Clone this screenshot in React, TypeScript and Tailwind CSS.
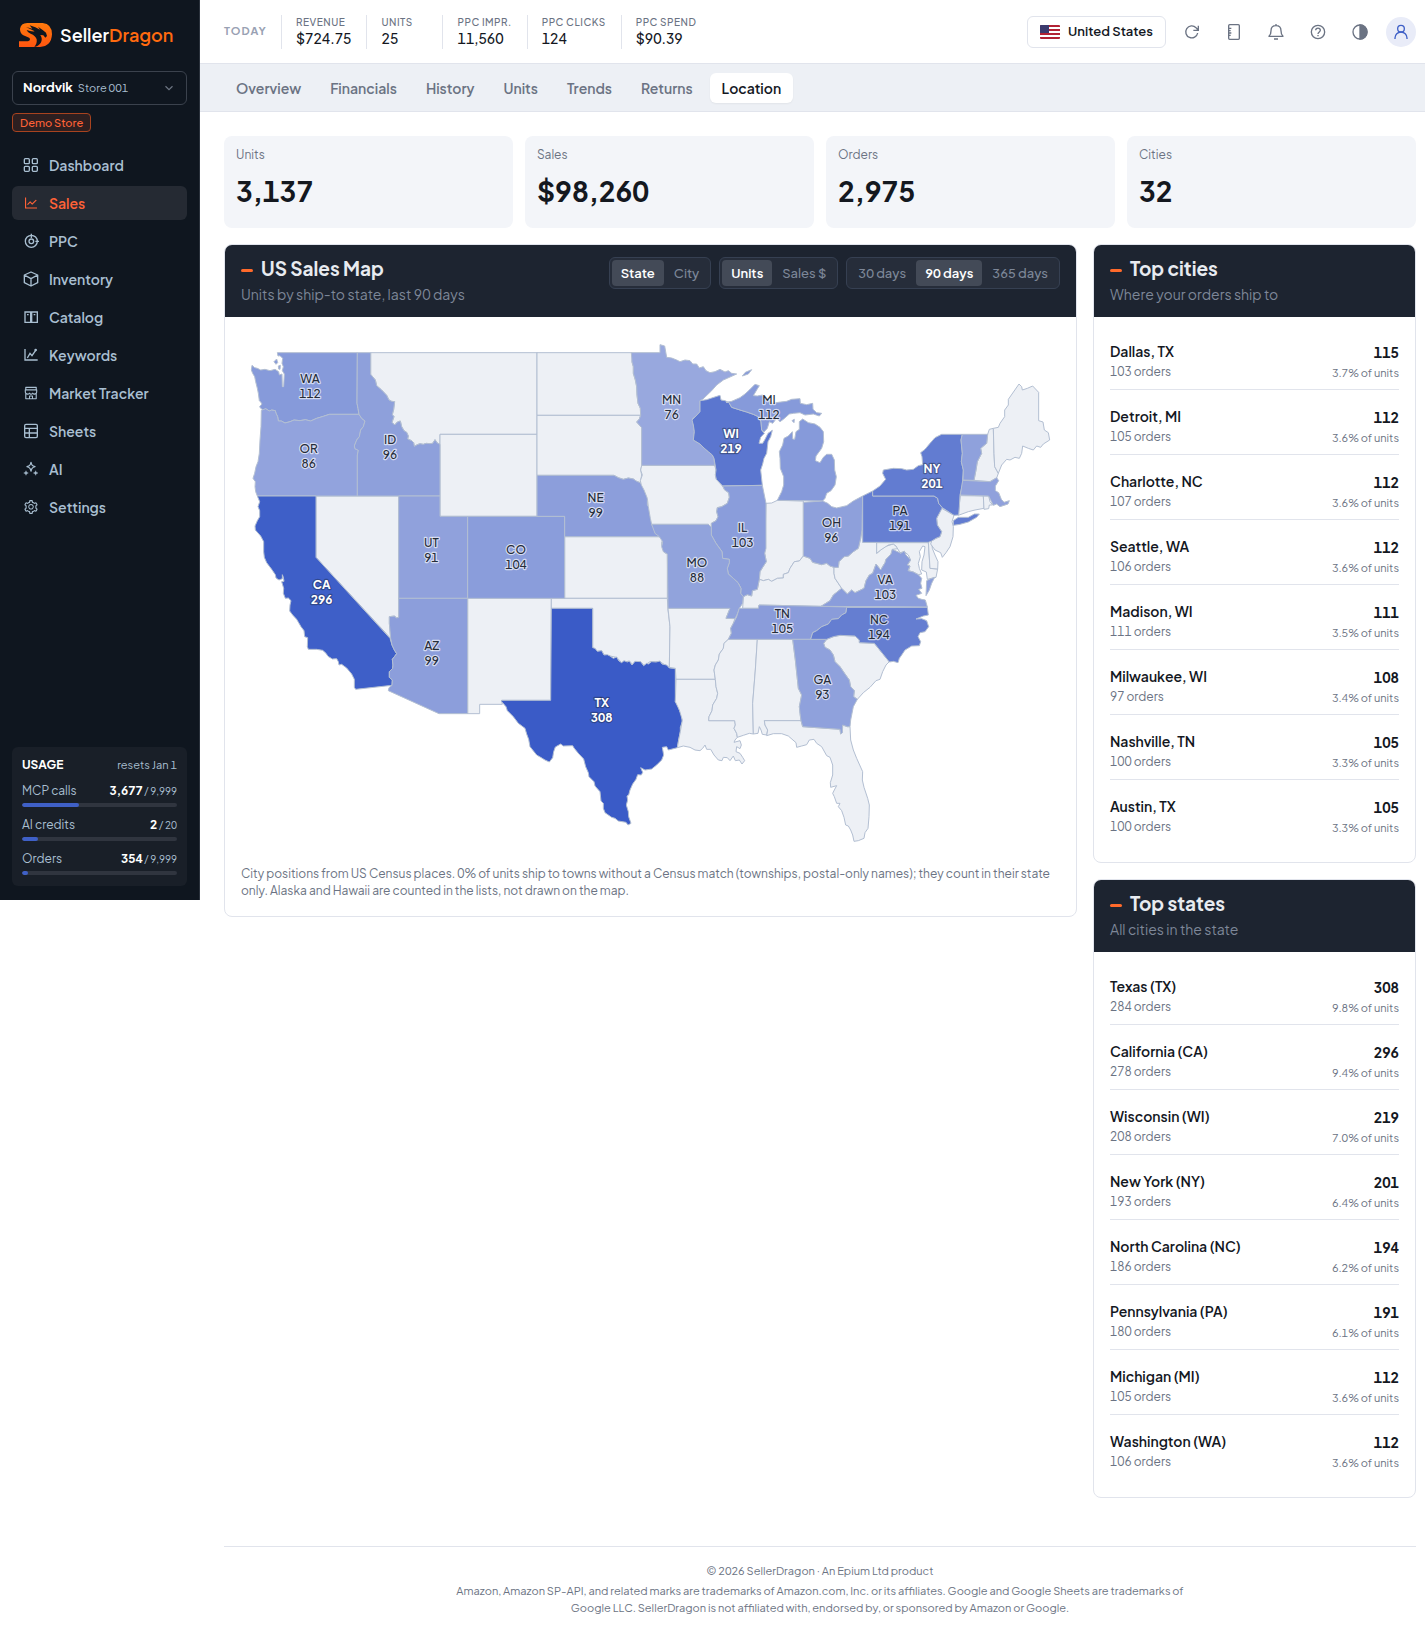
import type { ReactNode } from 'react';
import { AiOutlineLineChart, AiOutlineSetting, AiOutlineShop } from 'react-icons/ai';

type Region = { id: string; units?: number; points: string[]; label?: [number, number] };

// Western shapes, in map units (3 per pixel)
const WEST: Region[] = [
  { id: 'MT', points: ['452,338 951,338 951,583 660,583 660,613 652,609 645,599 638,610 630,611 618,610 610,613 600,611 592,614 583,619 581,608 575,602 563,597 565,588 560,577 552,572 545,560 541,543 532,546 524,555 516,547 522,530 517,524 521,508 524,485 515,484 507,480 500,466 485,450 470,437 466,420 452,403'] },
  { id: 'WY', points: ['660,583 951,583 951,829 660,829'] },
  { id: 'NV', points: ['288,768 536,768 536,1132 529,1134 524,1128 508,1130 508,1150 512,1195 288,952'] },
  { id: 'NM', points: ['743,1075 994,1075 992,1381 845,1381 847,1393 779,1393 779,1421 743,1421'] },
  { id: 'ND', points: ['951,338 1235,338 1238,352 1236,366 1240,380 1240,400 1246,420 1250,440 1251,465 1254,490 1261,505 1262,526 951,526'] },
  { id: 'SD', points: ['951,526 1262,526 1258,537 1250,546 1265,563 1265,678 1262,690 1265,705 1261,728 1250,724 1240,717 1225,714 1210,718 1195,713 1182,706 951,706'] },
  { id: 'KS', points: ['1034,890 1322,890 1330,898 1325,906 1325,916 1332,926 1334,938 1342,942 1342,1075 1034,1075'] },
  { id: 'OK', points: ['994,1075 1342,1075 1344,1110 1350,1160 1348,1282 1335,1275 1320,1265 1290,1265 1272,1277 1262,1265 1248,1265 1240,1275 1228,1263 1205,1268 1190,1252 1170,1248 1152,1245 1145,1232 1132,1234 1118,1223 1118,1105 994,1105'] },
  { id: 'WA', units: 112, label: [270, 416], points: ['172,338 412,338 411,490 414,505 417,523 328,523 310,529 290,535 272,543 256,539 240,542 222,540 210,545 195,549 184,543 175,543 173,530 168,520 166,512 155,510 148,513 137,506 130,510 122,505 119,500 126,492 122,486 118,482 115,460 112,445 107,425 104,410 98,400 94,390 96,376 104,383 112,385 122,390 135,388 150,392 165,388 176,395 178,405 186,402 187,440 191,440 193,402 187,392 190,380 186,370 188,355 180,347 174,348', '162,365 170,357 173,368 168,373', '175,378 181,376 180,388 176,387'] },
  { id: 'OR', units: 86, label: [266, 627], points: ['124,511 137,506 148,513 155,510 166,512 168,520 173,530 175,543 184,543 195,549 210,545 222,540 240,542 256,539 272,543 290,535 310,529 328,523 417,523 425,535 435,543 430,560 422,570 418,590 410,600 403,618 405,626 415,631 412,645 412,768 112,768 107,755 105,740 106,725 99,715 104,700 108,680 114,665 118,640 120,600 123,560'] },
  { id: 'ID', units: 96, label: [510, 600], points: ['412,338 452,338 452,403 466,420 470,437 485,450 500,466 507,480 515,484 524,485 521,508 517,524 522,530 516,547 524,555 532,546 541,543 545,560 552,572 560,577 565,588 563,597 575,602 581,608 583,619 592,614 600,611 610,613 618,610 630,611 638,610 645,599 652,609 660,613 660,768 412,768 412,645 415,631 405,626 403,618 410,600 418,590 422,570 430,560 435,543 425,535 417,523 414,505 411,490'] },
  { id: 'CA', units: 296, label: [305, 1035], points: ['112,768 288,768 288,952 510,1195 516,1215 523,1230 530,1241 524,1249 517,1258 519,1275 518,1285 508,1295 508,1312 517,1320 516,1336 407,1348 403,1342 403,1318 395,1302 380,1284 365,1273 357,1275 355,1265 350,1256 337,1257 324,1249 318,1240 308,1231 290,1228 265,1228 262,1220 263,1193 254,1190 252,1172 243,1160 230,1138 218,1125 209,1113 210,1095 213,1082 205,1074 196,1075 190,1060 191,1045 185,1025 192,1024 190,1012 187,1004 187,1016 177,1020 168,1014 166,1004 155,988 140,968 133,952 131,935 131,905 122,888 106,870 105,858 112,842 119,830 119,812 114,800 119,785'] },
  { id: 'UT', units: 91, label: [634, 909], points: ['536,768 660,768 660,829 743,829 743,1075 536,1075'] },
  { id: 'CO', units: 104, label: [888, 929], points: ['743,829 1034,829 1034,1075 743,1075'] },
  { id: 'AZ', units: 99, label: [635, 1217], points: ['536,1075 743,1075 743,1421 657,1421 505,1352 507,1343 516,1336 517,1320 508,1312 508,1295 518,1285 519,1275 517,1258 524,1249 530,1241 523,1230 516,1215 512,1195 508,1150 508,1130 524,1128 529,1134 536,1132'] },
  { id: 'NE', units: 99, label: [1127, 773], points: ['951,706 1182,706 1195,713 1210,718 1225,714 1240,717 1250,724 1261,728 1270,742 1275,755 1282,770 1282,795 1289,805 1292,830 1296,855 1303,868 1305,880 1315,885 1322,890 1034,890 1034,829 951,829'] },
  { id: 'TX', units: 308, label: [1145, 1388], points: ['994,1105 1118,1105 1118,1223 1125,1225 1132,1234 1145,1232 1152,1245 1162,1244 1170,1248 1180,1255 1190,1251 1196,1262 1205,1268 1212,1262 1222,1266 1228,1263 1236,1275 1245,1264 1262,1265 1271,1277 1280,1270 1285,1272 1295,1265 1308,1266 1320,1263 1326,1272 1340,1275 1348,1284 1366,1285 1366,1385 1374,1395 1378,1410 1385,1425 1387,1445 1381,1462 1381,1475 1376,1500 1372,1523 1345,1530 1340,1520 1327,1522 1331,1545 1325,1560 1310,1575 1295,1587 1275,1590 1262,1583 1268,1597 1264,1605 1253,1604 1248,1618 1238,1632 1230,1650 1226,1665 1221,1668 1223,1680 1219,1695 1225,1715 1226,1730 1233,1750 1224,1755 1218,1747 1195,1743 1185,1735 1175,1732 1155,1718 1150,1705 1150,1690 1143,1683 1140,1655 1125,1638 1122,1625 1107,1610 1105,1598 1097,1580 1091,1557 1075,1540 1062,1524 1058,1517 1030,1518 1022,1512 1006,1521 1001,1535 998,1553 988,1566 975,1560 962,1552 950,1545 930,1520 926,1498 920,1482 915,1465 895,1450 880,1430 862,1412 858,1400 845,1385 845,1381 992,1381'] },
];

// Eastern shapes, shifted by 1260 when drawn
const EAST: Region[] = [
  { id: 'IA', points: ['5,676 224,676 228,690 226,705 229,718 248,738 254,750 266,758 268,772 262,790 245,800 232,803 230,815 234,830 228,842 214,850 214,862 205,853 35,853 31,835 25,800 22,775 12,750 4,735 1,722 7,705 2,690'] },
  { id: 'AR', points: ['84,1105 270,1105 258,1135 285,1135 280,1150 272,1165 274,1180 265,1198 252,1210 250,1225 238,1242 235,1260 226,1275 222,1290 226,1318 108,1318 106,1285 88,1282 90,1160'] },
  { id: 'LA', points: ['108,1318 226,1318 228,1340 233,1360 230,1375 218,1395 216,1412 207,1430 206,1442 284,1442 286,1455 282,1465 290,1480 292,1492 285,1500 282,1507 300,1502 304,1515 300,1526 290,1520 288,1535 300,1540 308,1552 314,1562 306,1572 298,1560 286,1562 280,1548 270,1562 262,1553 250,1552 246,1562 235,1560 222,1545 212,1528 200,1528 195,1515 188,1525 180,1532 165,1530 150,1522 130,1518 112,1523 116,1500 121,1475 127,1440 118,1410 106,1385'] },
  { id: 'MS', points: ['265,1198 352,1198 346,1290 338,1390 340,1482 328,1480 310,1486 292,1492 290,1480 282,1465 286,1455 284,1442 206,1442 207,1430 216,1412 218,1395 230,1375 233,1360 228,1340 226,1318 222,1290 226,1275 235,1260 238,1242 250,1225 252,1210'] },
  { id: 'AL', points: ['352,1198 458,1198 466,1260 475,1345 485,1365 478,1400 480,1420 483,1442 373,1442 375,1455 383,1470 380,1485 367,1483 363,1470 358,1460 354,1480 340,1482 338,1390 346,1290'] },
  { id: 'FL', points: ['373,1442 483,1442 488,1460 600,1468 602,1482 607,1478 608,1455 622,1460 630,1460 632,1500 640,1530 650,1555 668,1595 667,1620 672,1642 683,1675 688,1695 687,1730 684,1765 675,1778 672,1795 655,1802 642,1804 638,1785 632,1770 625,1758 617,1755 612,1732 605,1712 595,1700 600,1690 590,1690 583,1670 578,1660 583,1650 590,1637 572,1642 571,1628 578,1605 578,1575 570,1552 560,1547 545,1520 530,1510 522,1498 508,1500 500,1514 485,1518 470,1522 468,1508 445,1488 425,1481 400,1481 380,1487 383,1470 375,1455'] },
  { id: 'SC', points: ['560,1198 580,1190 600,1186 645,1188 658,1200 658,1208 703,1210 748,1265 738,1275 728,1295 720,1318 708,1322 690,1342 670,1358 652,1378 641,1370 643,1352 632,1340 628,1320 615,1302 600,1280 585,1265 580,1245 570,1230 555,1222 551,1210'] },
  { id: 'IN', points: ['378,790 395,789 412,781 490,783 490,948 478,963 463,965 450,985 445,998 430,1003 430,1014 412,1015 395,1024 385,1018 370,1022 358,1018 360,995 368,982 379,965 374,940'] },
  { id: 'KY', points: ['308,1105 310,1070 322,1064 335,1068 337,1052 352,1048 358,1018 370,1022 385,1018 395,1024 412,1015 430,1014 430,1003 445,998 450,985 463,965 478,963 490,948 510,955 518,967 530,970 545,974 560,970 570,978 582,982 582,1000 585,1015 605,1045 580,1065 570,1082 543,1099 357,1095 355,1105'] },
  { id: 'WV', points: ['582,982 595,982 597,965 612,950 625,948 640,935 655,925 662,895 666,870 668,907 710,907 710,940 722,930 735,920 750,915 760,912 768,918 775,926 757,928 753,942 738,958 735,968 722,990 708,972 698,1000 688,1005 678,1022 672,1045 645,1058 635,1050 622,1062 605,1045 585,1015 582,1000'] },
  { id: 'MD', points: ['710,908 865,908 870,985 893,987 888,1012 862,1018 859,996 845,990 846,965 852,945 855,920 848,918 838,935 841,950 835,970 838,985 845,1002 835,1004 820,996 806,992 810,978 802,975 812,960 805,945 793,935 780,938 768,918 760,912 745,915 722,930 710,940'] },
  { id: 'DE', points: ['865,905 875,903 877,925 885,945 894,965 893,987 870,985'] },
  { id: 'NJ', points: ['905,805 942,826 936,845 940,860 939,890 930,920 918,938 907,952 902,938 885,930 872,912 875,903 888,895 900,890 905,875 892,855 890,835'] },
  { id: 'CT', points: ['961,767 1030,768 1032,805 1005,810 985,815 955,826 957,800'] },
  { id: 'RI', points: ['1030,768 1046,768 1050,785 1058,795 1048,795 1046,806 1032,808'] },
  { id: 'NH', points: ['1043,583 1048,568 1060,565 1062,640 1064,680 1075,700 1070,714 1050,725 1002,721 1008,690 1012,665 1025,640 1022,625 1040,610'] },
  { id: 'ME', points: ['1060,565 1075,562 1080,550 1094,530 1094,510 1105,495 1105,478 1137,432 1145,440 1147,450 1162,445 1178,438 1196,457 1196,542 1209,546 1213,570 1225,578 1229,600 1210,612 1202,622 1190,618 1180,630 1165,625 1148,618 1145,640 1138,655 1125,652 1110,660 1100,658 1085,675 1075,700 1064,680 1062,640'] },
  { id: 'MN', units: 76, label: [95, 479], points: ['-26,338 60,338 60,314 74,318 80,352 95,354 110,360 120,365 135,360 150,362 158,372 170,372 178,384 190,380 198,392 210,398 225,395 240,388 255,396 265,392 275,400 290,402 250,420 230,435 215,452 188,478 180,482 180,515 168,528 158,536 160,555 163,575 160,600 180,612 192,624 205,635 217,645 222,655 224,676 5,676 5,563 -10,546 -2,537 2,526 1,505 -6,490 -9,465 -10,440 -14,420 -20,400 -20,380 -24,366'] },
  { id: 'WI', units: 219, label: [273, 581], points: ['180,482 200,479 215,474 240,466 243,480 255,482 267,488 275,502 300,510 320,516 340,523 355,530 363,545 365,570 373,580 362,592 357,610 368,610 375,598 384,580 397,571 392,590 384,605 380,640 372,655 368,672 362,690 367,736 248,738 229,718 226,705 228,690 222,655 217,645 205,635 192,624 180,612 160,600 163,575 160,555 156,540 168,528 180,515'] },
  { id: 'IL', units: 103, label: [308, 864], points: ['248,738 367,736 378,790 378,925 374,940 379,965 368,982 360,995 358,1018 352,1048 337,1052 335,1068 322,1064 310,1070 302,1060 303,1045 294,1028 280,1015 265,1002 262,985 268,968 268,958 248,955 246,935 228,910 214,885 214,862 214,850 228,842 234,830 230,815 232,803 245,800 262,790 268,772 266,758 254,750'] },
  { id: 'MI', units: 112, label: [387, 479], points: ['258,487 275,484 300,473 315,462 328,450 345,433 358,437 350,450 340,467 352,468 368,465 385,478 395,490 415,487 440,484 455,478 480,476 481,490 500,494 518,490 519,508 530,518 545,520 538,528 520,522 495,525 480,518 460,520 448,522 430,538 420,545 410,535 398,550 388,545 382,565 372,576 365,570 363,545 355,530 340,523 320,516 300,510 275,502 267,488', '307,408 316,397 335,389 325,402', '456,542 463,538 462,548', '412,781 425,755 431,735 431,710 421,685 420,655 418,635 428,615 432,595 445,588 457,575 458,597 464,598 468,575 478,568 478,545 488,537 505,548 525,552 540,562 550,575 551,605 545,625 528,648 526,662 540,668 550,652 560,643 575,643 583,660 584,690 589,710 585,735 573,752 560,760 555,775 548,783'] },
  { id: 'OH', units: 96, label: [574, 849], points: ['490,787 548,783 563,790 575,800 590,804 620,797 640,783 668,768 666,870 662,895 655,925 640,935 625,948 612,950 597,965 595,982 582,982 570,978 560,970 545,974 530,970 518,967 510,955 490,948'] },
  { id: 'MO', units: 88, label: [171, 968], points: ['35,853 205,853 214,862 214,885 228,910 246,935 248,955 268,958 268,968 262,985 265,1002 280,1015 294,1028 303,1045 302,1060 310,1070 308,1090 298,1105 293,1120 285,1136 258,1135 270,1105 84,1105 82,942 70,935 65,920 68,905 58,890 45,880'] },
  { id: 'TN', units: 105, label: [427, 1121], points: ['298,1105 355,1105 357,1095 543,1099 620,1101 618,1118 605,1125 595,1136 575,1138 565,1152 545,1160 530,1172 518,1178 512,1198 265,1198 274,1180 272,1165 280,1150 290,1130'] },
  { id: 'VA', units: 103, label: [736, 1019], points: ['543,1099 570,1082 580,1065 605,1045 622,1062 635,1050 645,1058 672,1045 678,1022 688,1005 698,1000 708,972 722,990 735,968 738,958 753,942 757,928 775,936 782,940 793,933 798,945 812,960 802,975 810,978 804,992 820,996 835,1004 845,1015 842,1030 846,1045 836,1048 845,1060 828,1066 835,1075 845,1078 856,1080 862,1101', '860,1022 872,1016 884,1012 875,1030 868,1050 858,1067'] },
  { id: 'GA', units: 93, label: [547, 1320], points: ['458,1198 560,1198 551,1210 555,1222 570,1230 580,1245 585,1265 600,1280 615,1302 628,1320 632,1340 643,1352 641,1370 652,1378 640,1400 635,1425 632,1440 630,1460 622,1460 608,1455 607,1478 602,1482 600,1468 488,1460 483,1442 480,1420 478,1400 485,1365 475,1345 466,1260'] },
  { id: 'NC', units: 194, label: [717, 1139], points: ['620,1102 862,1102 865,1125 850,1128 828,1137 845,1136 860,1142 866,1160 855,1175 840,1178 834,1190 842,1205 838,1217 815,1218 795,1230 785,1245 778,1255 774,1268 760,1264 748,1266 703,1210 658,1208 658,1200 645,1188 600,1186 580,1190 560,1198 512,1198 518,1178 530,1172 545,1160 565,1152 575,1138 595,1136 605,1125 618,1118'] },
  { id: 'PA', units: 191, label: [780, 813], points: ['668,768 698,753 698,768 882,768 893,775 896,790 907,803 890,835 892,855 905,875 900,890 888,895 875,903 865,907 668,907'] },
  { id: 'NY', units: 201, label: [876, 686], points: ['698,753 720,738 737,718 728,700 730,690 760,685 785,686 800,690 820,688 835,677 848,674 846,650 842,638 855,628 870,610 885,593 905,583 967,583 963,600 967,640 964,665 970,690 967,735 960,765 958,800 956,825 942,826 907,803 896,790 893,775 882,768 698,768', '940,842 955,832 985,832 1003,822 1018,822 1010,832 985,846 960,853 940,856'] },
  { id: 'VT', units: 93, points: ['967,583 1043,583 1040,610 1022,625 1025,640 1012,665 1008,690 1002,721 969,720 970,690 964,665 967,640 963,600'] },
  { id: 'MA', units: 92, points: ['968,721 1050,725 1070,713 1076,722 1066,738 1066,752 1076,758 1084,778 1092,787 1108,782 1104,792 1080,800 1070,792 1060,796 1046,768 961,765'] },
];

function shade(units?: number) {
  if (!units) return '#edf0f5';
  const t = Math.min(1, Math.max(0, (units - 76) / (308 - 76)));
  const from = [152, 168, 222];
  const to = [58, 91, 199];
  const k = Math.pow(t, 0.9);
  const [r, g, b] = from.map((c, i) => Math.round(c + (to[i] - c) * k));
  return `rgb(${r} ${g} ${b})`;
}

function Shapes({ regions }: { regions: Region[] }) {
  return (
    <>
      {regions.map((r) => (
        <g key={r.id} fill={shade(r.units)} stroke="#b3bfd2" strokeWidth={3} strokeLinejoin="round">
          {r.points.map((p) => (
            <polygon key={p} points={p} />
          ))}
        </g>
      ))}
      {regions.map((r) => {
        if (!r.label) return null;
        const strong = (r.units ?? 0) > 200;
        return (
          <g
            key={r.id}
            textAnchor="middle"
            fontSize={36}
            fontWeight={strong ? 700 : 500}
            fill={strong ? '#ffffff' : '#262d3a'}
            stroke={strong ? '#1d243066' : '#ffffffa6'}
            strokeWidth={7}
            strokeLinejoin="round"
            paintOrder="stroke"
          >
            <text x={r.label[0]} y={r.label[1] + 13}>{r.id}</text>
            <text x={r.label[0]} y={r.label[1] + 58}>{r.units}</text>
          </g>
        );
      })}
    </>
  );
}

function UsMap() {
  return (
    <svg viewBox="63 279 2457 1572" className="block w-full" role="img" aria-label="Units by state">
      <Shapes regions={WEST} />
      <g transform="translate(1260 0)">
        <Shapes regions={EAST} />
      </g>
    </svg>
  );
}

function Glyph({ children, className = 'size-4', width = 4 }: { children: ReactNode; className?: string; width?: number }) {
  return (
    <svg viewBox="0 0 48 48" className={className} fill="none" stroke="currentColor" strokeWidth={width} aria-hidden="true">
      {children}
    </svg>
  );
}

const NAV: { label: string; icon: ReactNode }[] = [
  {
    label: 'Dashboard',
    icon: (
      <Glyph>
        <rect x="4" y="5" width="15" height="15" rx="3" />
        <rect x="28" y="5" width="15" height="15" rx="3" />
        <rect x="4" y="28" width="15" height="15" rx="3" />
        <rect x="28" y="28" width="15" height="15" rx="3" />
      </Glyph>
    ),
  },
  { label: 'Sales', icon: <AiOutlineLineChart className="size-4" /> },
  {
    label: 'PPC',
    icon: (
      <Glyph>
        <circle cx="25" cy="25" r="18" />
        <circle cx="25" cy="25" r="7" />
        <path d="M25 2v13M37 25h12" />
      </Glyph>
    ),
  },
  {
    label: 'Inventory',
    icon: (
      <Glyph>
        <path d="M24 3l20 9v23l-20 10L4 35V12zM4 12l20 11 20-11M24 23v22" strokeLinejoin="round" />
      </Glyph>
    ),
  },
  {
    label: 'Catalog',
    icon: (
      <Glyph>
        <path d="M6 9h17v31H6zM26 9h17v31H26zM12 17h5M32 17h5" />
      </Glyph>
    ),
  },
  {
    label: 'Keywords',
    icon: (
      <Glyph>
        <path d="M6 6v33h38M13 33l8-14 6 7 11-16" />
        <circle cx="38" cy="9" r="2" />
      </Glyph>
    ),
  },
  { label: 'Market Tracker', icon: <AiOutlineShop className="size-4" /> },
  {
    label: 'Sheets',
    icon: (
      <Glyph>
        <rect x="5" y="4" width="38" height="40" rx="4" />
        <path d="M5 16h38M5 30h38M19 16v28" />
      </Glyph>
    ),
  },
  {
    label: 'AI',
    icon: (
      <Glyph>
        <path d="M24 4c2 9 4 11 12 13-8 2-10 4-12 13-2-9-4-11-12-13 8-2 10-4 12-13z" strokeLinejoin="round" />
        <path d="M9 29l2 5 5 2-5 2-2 5-2-5-5-2 5-2zM38 29l2 5 5 2-5 2-2 5-2-5-5-2 5-2z" fill="currentColor" strokeWidth="1" />
      </Glyph>
    ),
  },
  { label: 'Settings', icon: <AiOutlineSetting className="size-4" /> },
];

const USAGE = [
  { label: 'MCP calls', used: '3,677', limit: '9,999', percent: 37 },
  { label: 'AI credits', used: '2', limit: '20', percent: 10 },
  { label: 'Orders', used: '354', limit: '9,999', percent: 4 },
];

function Logo() {
  return (
    <svg viewBox="57 72 99 72" className="h-6 w-[33px]" aria-hidden="true">
      <defs>
        <linearGradient id="flame" x1="0" y1="0" x2="0" y2="1">
          <stop offset="0" stopColor="#ff7a0c" />
          <stop offset="1" stopColor="#ff5510" />
        </linearGradient>
      </defs>
      <path
        fill="url(#flame)"
        d="M57 144V127H84Q90 126 90 121 90 117 84 115L70 109Q60 103 60 90 62 72 82 72H128Q156 75 156 106 154 142 120 144Z"
      />
      <path
        fill="#0f161f"
        d="M78 84L97 89 89 79 106 85 120 92 114 83 128 93 138 101 141 111 136 116 130 109 121 108Q129 120 122 132 114 143 103 144 112 133 110 121 107 110 92 104 82 100 80 93 92 98 104 97 92 93Z"
      />
    </svg>
  );
}

function Sidebar() {
  return (
    <aside className="sticky top-0 flex h-[900px] w-[200px] shrink-0 flex-col border-r border-[#2a313b] bg-[#0f161f] px-3 pb-[14px] pt-[23px]">
      <a href="#" className="ml-[7px] flex items-center gap-2 text-[18px] font-semibold leading-6 text-white">
        <Logo />
        <span>
          Seller<span className="text-[#ff6a0f]">Dragon</span>
        </span>
      </a>
      <button type="button" className="mt-6 flex h-[34px] w-[175px] items-center rounded-md border border-[#3b424d] px-2.5 text-left">
        <span className="text-[13px] font-bold text-white">Nordvik</span>
        <span className="ml-[5px] text-[11px] text-[#a9bfd1]">Store 001</span>
        <Glyph className="ml-auto size-3.5" width={4}>
          <path d="M12 18l12 12 12-12" stroke="#6d7683" />
        </Glyph>
      </button>
      <span className="mt-2 self-start rounded border border-[#a8431f] bg-[#2d1f20] px-[7px] text-[11px] font-medium leading-[17px] text-[#ff6237]">Demo Store</span>
      <nav className="mt-4 flex w-[175px] flex-col gap-1">
        {NAV.map((item) => (
          <a
            key={item.label}
            href="#"
            aria-current={item.label === 'Sales' ? 'page' : undefined}
            className={
              item.label === 'Sales'
                ? 'flex h-[34px] items-center gap-2.5 rounded-md bg-[#252a33] px-[11px] text-[14px] font-semibold text-[#ff6237]'
                : 'flex h-[34px] items-center gap-2.5 rounded-md px-[11px] text-[14px] font-semibold text-[#a9bfd1]'
            }
          >
            {item.icon}
            {item.label}
          </a>
        ))}
      </nav>
      <section className="mt-auto w-[175px] rounded-md bg-[#191f28] px-2.5 pb-[11px] pt-2.5">
        <div className="flex items-center justify-between leading-4">
          <h2 className="text-[12px] font-bold text-white">USAGE</h2>
          <span className="text-[11px] text-[#a9bfd1]">resets Jan 1</span>
        </div>
        {USAGE.map((u) => (
          <div key={u.label} className="mt-2">
            <div className="flex items-center justify-between text-[12px] leading-5 text-[#a9bfd1]">
              <span>{u.label}</span>
              <span className="text-[10px]">
                <b className="text-[12px] text-white">{u.used}</b> / {u.limit}
              </span>
            </div>
            <div className="mt-0.5 h-1 overflow-hidden rounded-full bg-[#30353f]">
              <div className="h-full rounded-full bg-[#3f60c7]" style={{ width: `${u.percent}%` }} />
            </div>
          </div>
        ))}
      </section>
    </aside>
  );
}

const TODAY = [
  { label: 'REVENUE', value: '$724.75' },
  { label: 'UNITS', value: '25' },
  { label: 'PPC IMPR.', value: '11,560' },
  { label: 'PPC CLICKS', value: '124' },
  { label: 'PPC SPEND', value: '$90.39' },
];

const ACTIONS: { label: string; icon: ReactNode }[] = [
  {
    label: 'Refresh',
    icon: (
      <Glyph>
        <path d="M41 27a18 18 0 1 1-5-16l6 7M43 5v14H28" />
      </Glyph>
    ),
  },
  {
    label: 'Notebook',
    icon: (
      <Glyph>
        <rect x="8" y="2" width="32" height="44" rx="3" />
        <path d="M8 13h8M8 20h6M8 27h8M8 34h6" />
      </Glyph>
    ),
  },
  {
    label: 'Notifications',
    icon: (
      <Glyph>
        <path d="M3 37h42c-5-5-6-9-6-17C39 10 33 5 24 5S9 10 9 20c0 8-1 12-6 17zM24 0v5M18 45h12" strokeLinejoin="round" />
      </Glyph>
    ),
  },
  {
    label: 'Help',
    icon: (
      <Glyph>
        <circle cx="24" cy="24" r="20" />
        <path d="M17 19c0-9 14-9 14 0 0 5-7 5-7 11M24 33v4" />
      </Glyph>
    ),
  },
  {
    label: 'Theme',
    icon: (
      <Glyph>
        <circle cx="24" cy="24" r="21" />
        <path d="M24 3a21 21 0 0 1 0 42z" fill="currentColor" />
      </Glyph>
    ),
  },
];

function Flag() {
  return (
    <svg viewBox="0 0 20 14" className="h-3.5 w-5 rounded-[1px]" aria-hidden="true">
      <path fill="#fff" d="M0 0h20v14H0z" />
      <path fill="#b22234" d="M0 0h20v2H0zM0 4h20v2H0zM0 8h20v2H0zM0 12h20v2H0z" />
      <path fill="#3c3b6e" d="M0 0h9v8H0z" />
    </svg>
  );
}

function Header() {
  return (
    <header className="flex h-16 items-center border-b border-[#e1e4ec] pl-6 pr-[9px]">
      <span className="w-[57px] text-[11px] font-bold tracking-widest text-[#99a1b3]">TODAY</span>
      <dl className="flex">
        {TODAY.map((t) => (
          <div key={t.label} className="h-[34px] min-w-[76px] border-l border-[#e1e4ec] pl-3.5 pr-[15px]">
            <dt className="text-[10px] font-medium leading-[14px] tracking-wider text-[#6b7383]">{t.label}</dt>
            <dd className="text-[14px] font-medium leading-[18px] text-[#14181f]">{t.value}</dd>
          </div>
        ))}
      </dl>
      <div className="ml-auto flex items-center gap-[11px]">
        <button type="button" className="flex h-8 items-center gap-2 rounded-md border border-[#e1e4ec] px-3 text-[13px] font-semibold text-[#14181f]">
          <Flag />
          United States
        </button>
        <div className="flex items-center gap-3">
          {ACTIONS.map((a) => (
            <button key={a.label} type="button" aria-label={a.label} className="flex size-[30px] items-center justify-center text-[#6b7383]">
              {a.icon}
            </button>
          ))}
        </div>
        <button type="button" aria-label="Account" className="flex size-[30px] items-center justify-center rounded-full bg-[#e9ecf8] text-[#3f60c7]">
          <Glyph>
            <circle cx="24" cy="14" r="10" />
            <path d="M6 45v-3c0-10 8-18 18-18s18 8 18 18v3" />
          </Glyph>
        </button>
      </div>
    </header>
  );
}

const TABS = ['Overview', 'Financials', 'History', 'Units', 'Trends', 'Returns', 'Location'];

function Tabs() {
  return (
    <nav className="flex h-12 items-center gap-[5px] border-b border-[#e1e4ec] bg-[#edf0f5] px-6">
      {TABS.map((t) => (
        <a
          key={t}
          href="#"
          className={
            t === 'Location'
              ? 'rounded-md bg-white px-3 text-[14px] font-semibold leading-[30px] text-[#14181f] shadow-xs'
              : 'rounded-md px-3 text-[14px] font-semibold leading-[30px] text-[#6b7383]'
          }
        >
          {t}
        </a>
      ))}
    </nav>
  );
}

const STATS = [
  { label: 'Units', value: '3,137' },
  { label: 'Sales', value: '$98,260' },
  { label: 'Orders', value: '2,975' },
  { label: 'Cities', value: '32' },
];

function PanelHeader({ title, note, children }: { title: string; note: string; children?: ReactNode }) {
  return (
    <div className="flex items-start justify-between bg-[#1d2430] px-4 pb-[13px] pt-[11px]">
      <div>
        <h2 className="flex items-center gap-2 text-[19px] font-bold leading-6 text-[#e8ebf0]">
          <span className="mt-1 h-[3px] w-3 rounded-full bg-[#ff6a2b]" />
          {title}
        </h2>
        <p className="mt-1 text-[14px] leading-5 text-[#7d8798]">{note}</p>
      </div>
      {children}
    </div>
  );
}

function Segment({ options, active }: { options: string[]; active: string }) {
  return (
    <div role="group" className="flex h-8 gap-px rounded-md border border-[#364052] bg-[#262d3a] p-0.5">
      {options.map((o) => (
        <button
          key={o}
          type="button"
          aria-pressed={o === active}
          className={
            o === active
              ? 'rounded bg-[#434a57] px-[9px] pt-0.5 text-[13px] font-semibold text-white'
              : 'rounded px-[9px] pt-0.5 text-[13px] font-medium text-[#7d8798]'
          }
        >
          {o}
        </button>
      ))}
    </div>
  );
}

type Place = [name: string, orders: number, units: number, share: string];

const CITIES: Place[] = [
  ['Dallas, TX', 103, 115, '3.7'],
  ['Detroit, MI', 105, 112, '3.6'],
  ['Charlotte, NC', 107, 112, '3.6'],
  ['Seattle, WA', 106, 112, '3.6'],
  ['Madison, WI', 111, 111, '3.5'],
  ['Milwaukee, WI', 97, 108, '3.4'],
  ['Nashville, TN', 100, 105, '3.3'],
  ['Austin, TX', 100, 105, '3.3'],
];

const STATES: Place[] = [
  ['Texas (TX)', 284, 308, '9.8'],
  ['California (CA)', 278, 296, '9.4'],
  ['Wisconsin (WI)', 208, 219, '7.0'],
  ['New York (NY)', 193, 201, '6.4'],
  ['North Carolina (NC)', 186, 194, '6.2'],
  ['Pennsylvania (PA)', 180, 191, '6.1'],
  ['Michigan (MI)', 105, 112, '3.6'],
  ['Washington (WA)', 106, 112, '3.6'],
];

function PlaceList({ title, note, places }: { title: string; note: string; places: Place[] }) {
  return (
    <section className="overflow-hidden rounded-lg border border-[#e1e4ec]">
      <PanelHeader title={title} note={note} />
      <ul className="px-4 pb-[17px] pt-2">
        {places.map(([name, orders, units, share]) => (
          <li key={name} className="flex justify-between border-b border-[#e1e4ec] pb-[7px] pt-[15px] last:border-transparent">
            <div>
              <p className="text-[14px] font-semibold leading-[22px] text-[#14181f]">{name}</p>
              <p className="text-[12px] leading-5 text-[#6b7383]">{orders} orders</p>
            </div>
            <div className="text-right">
              <p className="text-[14px] font-bold leading-6 text-[#14181f]">{units}</p>
              <p className="text-[11px] leading-[18px] text-[#6b7383]">{share}% of units</p>
            </div>
          </li>
        ))}
      </ul>
    </section>
  );
}

export default function App() {
  return (
    <div className="flex items-start bg-white font-['Plus_Jakarta_Sans','Inter',sans-serif] tabular-nums">
      <Sidebar />
      <div className="min-w-0 flex-1">
        <Header />
        <Tabs />
        <main className="pl-6 pr-[9px] pt-6">
          <div className="grid grid-cols-4 gap-3">
            {STATS.map((s) => (
              <div key={s.label} className="rounded-lg bg-[#f3f5f9] px-3 pb-[19px] pt-2.5">
                <p className="text-[12px] leading-[18px] text-[#6b7383]">{s.label}</p>
                <p className="mt-[9px] text-[28px] font-bold leading-9 text-[#14181f]">{s.value}</p>
              </div>
            ))}
          </div>
          <div className="mt-4 flex items-start gap-4">
            <section className="min-w-0 flex-1 overflow-hidden rounded-lg border border-[#e1e4ec]">
              <PanelHeader title="US Sales Map" note="Units by ship-to state, last 90 days">
                <div className="mt-px flex gap-2">
                  <Segment options={['State', 'City']} active="State" />
                  <Segment options={['Units', 'Sales $']} active="Units" />
                  <Segment options={['30 days', '90 days', '365 days']} active="90 days" />
                </div>
              </PanelHeader>
              <div className="px-4 pb-[17px] pt-4">
                <UsMap />
                <p className="mt-2 text-[12px] leading-[17px] text-[#6b7383]">
                  City positions from US Census places. 0% of units ship to towns without a Census match (townships, postal-only names); they count in their state
                  only. Alaska and Hawaii are counted in the lists, not drawn on the map.
                </p>
              </div>
            </section>
            <aside className="flex w-[323px] shrink-0 flex-col gap-4">
              <PlaceList title="Top cities" note="Where your orders ship to" places={CITIES} />
              <PlaceList title="Top states" note="All cities in the state" places={STATES} />
            </aside>
          </div>
          <footer className="mt-12 border-t border-[#e1e4ec] pb-6 pt-4 text-center text-[11px] text-[#6b7383]">
            <p className="leading-4">© 2026 SellerDragon · An Epium Ltd product</p>
            <p className="mx-auto mt-[3px] max-w-[740px] leading-[17px]">
              Amazon, Amazon SP-API, and related marks are trademarks of Amazon.com, Inc. or its affiliates. Google and Google Sheets are trademarks of Google LLC.
              SellerDragon is not affiliated with, endorsed by, or sponsored by Amazon or Google.
            </p>
          </footer>
        </main>
      </div>
    </div>
  );
}
